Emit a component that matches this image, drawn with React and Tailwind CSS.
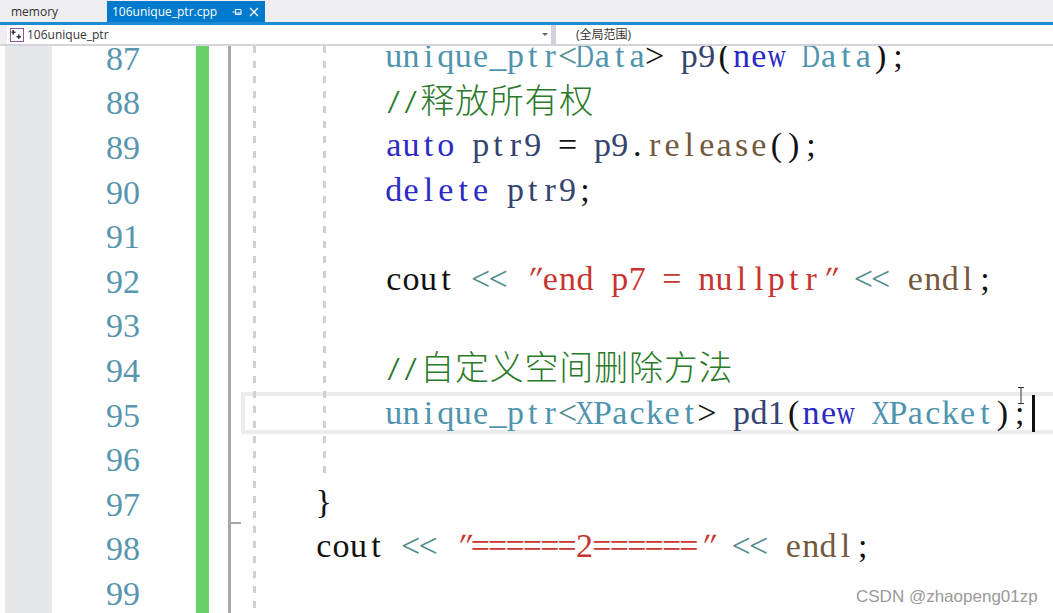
import React from 'react';

const kw = 'text-[#2a2ac4]';
const ty = 'text-[#4f94ae]';
const va = 'text-[#34436f]';
const fn = 'text-[#74583c]';
const cm = 'text-[#2a7a2a]';
const st = 'text-[#c8352f]';
const op = 'text-[#4f8a8a]';
const tx = 'text-[#111]';

const lines = [
  { n: 87, indent: 4, code: [['unique_ptr', ty], ['<', op], ['Data', ty], ['>', tx], [' p9', va], ['(', tx], ['new', kw], [' Data', ty], [');', tx]] },
  { n: 88, indent: 4, code: [['//释放所有权', cm]] },
  { n: 89, indent: 4, code: [['auto', kw], [' ptr9', va], [' = ', tx], ['p9', va], ['.', tx], ['release', fn], ['();', tx]] },
  { n: 90, indent: 4, code: [['delete', kw], [' ptr9', va], [';', tx]] },
  { n: 91, indent: 0, code: [] },
  { n: 92, indent: 4, code: [['cout ', tx], ['<<', op], [' ', tx], ['"end p7 = nullptr"', st], [' ', tx], ['<<', op], [' ', tx], ['endl', fn], [';', tx]] },
  { n: 93, indent: 0, code: [] },
  { n: 94, indent: 4, code: [['//自定义空间删除方法', cm]] },
  { n: 95, indent: 4, code: [['unique_ptr', ty], ['<', op], ['XPacket', ty], ['>', tx], [' pd1', va], ['(', tx], ['new', kw], [' XPacket', ty], [');', tx]] },
  { n: 96, indent: 0, code: [] },
  { n: 97, indent: 0, code: [['}', tx]] },
  { n: 98, indent: 0, code: [['cout ', tx], ['<<', op], [' ', tx], ['"======2======"', st], [' ', tx], ['<<', op], [' ', tx], ['endl', fn], [';', tx]] },
  { n: 99, indent: 0, code: [] },
];

// the editor font is a thin monospaced serif, so each letter gets its own half-width cell
function Glyph({ ch }) {
  if (/[\u4e00-\u9fff]/.test(ch)) {
    return <span className="inline-flex justify-center w-[34.8px] text-[34px] font-light font-['Noto_Sans_CJK_SC',serif]">{ch}</span>;
  }
  let extra = '';
  if ('wmXD'.includes(ch)) extra = 'scale-x-75';
  if (ch === '"') extra = '-skew-x-[24deg]';
  if (ch === '/') extra = 'scale-x-125';
  return <span className={`inline-flex justify-center w-[17.4px] ${extra}`}>{ch}</span>;
}

function CodeLine({ line }) {
  return (
    <div className={`h-[44.6px] flex items-center whitespace-pre ${line.indent ? 'pl-[154px]' : 'pl-[84px]'}`}>
      {line.code.map(([text, color], i) => (
        <span key={i} className={color}>
          {Array.from(text).map((ch, j) => <Glyph key={j} ch={ch} />)}
        </span>
      ))}
    </div>
  );
}

export default function App() {
  return (
    <div className="w-[1053px] h-[613px] overflow-hidden flex flex-col bg-white relative font-['Open_Sans',sans-serif]">
      {/* tabs */}
      <div className="h-[22px] bg-[#eeeef2] flex items-end text-[12px] shrink-0">
        <div className="w-[107px] h-[21px] pl-[11px] flex items-center text-[#333]">memory</div>
        <div className="w-[158px] h-[21px] bg-[#007acc] text-white pl-[5px] pr-[6px] flex items-center justify-between">
          <span>106unique_ptr.cpp</span>
          <span className="flex items-center gap-[7px]">
            <svg width="10" height="10" viewBox="0 0 10 10" fill="none" stroke="#fff" strokeWidth="1">
              <path d="M0.5 5h3M3.5 2.5v5M3.5 2.5h5.5v5h-5.5M3.5 6h5.5" />
            </svg>
            <svg width="10" height="10" viewBox="0 0 10 10" fill="none" stroke="#fff" strokeWidth="1.4">
              <path d="M1 1l8 8M9 1l-8 8" />
            </svg>
          </span>
        </div>
      </div>
      <div className="h-[3px] bg-[#1f8ad2] shrink-0" />
      {/* navigation bar */}
      <div className="h-[21px] bg-[#eeeef2] border-b-2 border-[#d4d5dc] flex shrink-0 pl-[7px] text-[12px] text-[#333]">
        <div className="w-[544px] bg-white flex items-center pl-[3px] pr-[3px] gap-[3px]">
          <svg width="14" height="14" viewBox="0 0 14 14" className="shrink-0">
            <rect x="0.5" y="0.5" width="13" height="13" fill="#fff" stroke="#8c5a96" />
            <path d="M4 2v1.5h1.5v1.5H4v1.5H2.5V5H1.5V3.5h1V2zM9.5 6.5V8H11v1.5H9.5V11H8V9.5H6.5V8H8V6.5z" fill="#333" />
          </svg>
          <span className="flex-1">106unique_ptr</span>
          <span className="border-x-[3px] border-t-[3px] border-x-transparent border-t-[#666]" />
        </div>
        <div className="w-[5px] bg-[#d0d1da]" />
        <div className="flex-1 bg-white flex items-center pl-[20px] text-[12px] font-['Open_Sans','Noto_Sans_CJK_SC',sans-serif]">(全局范围)</div>
      </div>
      {/* editor */}
      <div className="flex-1 min-h-0 overflow-hidden flex pl-[5px]">
        <div className="w-[47px] bg-[#e6e7e8] shrink-0" />
        <div className="w-[144px] shrink-0 -mt-[10px] font-['Liberation_Serif',serif] text-[34px] text-[#5796ae] pl-[54px]">
          {lines.map(l => (
            <div key={l.n} className="h-[44.6px] flex items-center">{l.n}</div>
          ))}
        </div>
        <div className="w-[13px] bg-[#68d168] shrink-0" />
        <div className="w-[19px] shrink-0" />
        <div className="w-[3px] bg-[#a8a8a8] shrink-0" />
        <div className="flex-1 relative">
          {/* current line box */}
          <div className="absolute left-[10px] right-0 top-[346px] h-[42px] border-y-[4px] border-l-[4px] border-[#ececee]" />
          {/* indent guides */}
          <div className="absolute left-[22px] top-0 bottom-0 w-[3px] bg-[repeating-linear-gradient(#d0d0d0_0_7px,transparent_7px_15px)]" />
          <div className="absolute left-[92px] top-0 h-[432px] w-[3px] bg-[repeating-linear-gradient(#d0d0d0_0_7px,transparent_7px_15px)]" />
          {/* fold tick */}
          <div className="absolute left-0 top-[476px] w-[10px] h-[2px] bg-[#a8a8a8]" />
          <div className="relative -mt-[13px] text-[34px] font-['Liberation_Serif',serif]">
            {lines.map(l => <CodeLine key={l.n} line={l} />)}
          </div>
          {/* caret */}
          <div className="absolute left-[801px] top-[349px] w-[3px] h-[37px] bg-[#111]" />
          {/* I-beam */}
          <svg className="absolute left-[786px] top-[341px]" width="8" height="17" viewBox="0 0 8 17" fill="none" stroke="#333" strokeWidth="1">
            <path d="M1 0.5h6M4 0.5v16M1 16.5h6" />
          </svg>
        </div>
      </div>
      {/* watermark */}
      <div className="absolute left-[856px] top-[584px] text-[17px] text-[#9a9a9a] font-['Liberation_Sans',sans-serif]">CSDN @zhaopeng01zp</div>
    </div>
  );
}
